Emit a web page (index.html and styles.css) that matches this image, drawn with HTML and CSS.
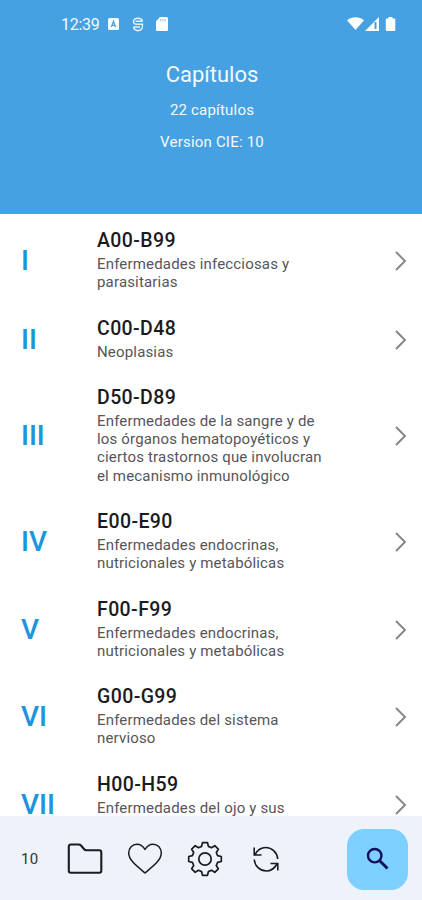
FILE: index.html
```html
<!DOCTYPE html>
<html lang="es">

<head>
    <meta charset="UTF-8">
    <title>Capítulos</title>
    <link rel="stylesheet" href="styles.css">
</head>

<body>
    <div id="header">
        <div class="status">
            <span class="clock">12:39</span>
            <svg class="app" width="11" height="12" viewBox="0 0 11 12">
                <rect width="11" height="12" rx="1.5" fill="#f5fbff" />
                <path d="M3.4 9L5.5 3.2 7.6 9M4.1 7.3h2.8" fill="none" stroke="#459fdf" stroke-width="1.2" />
            </svg>
            <svg class="shield" width="12" height="15" viewBox="0 0 12 15">
                <path d="M10.500 4.500C10.500 2.500 8.500 1.200 6 1.200S1.500 2.500 1.500 4.500 3 7.300 5 7.300h5.500v2C10.500 12 8.500 13.300 6 13.800 3.500 13.300 1.500 12 1.500 9.500M2 10H8M3.500 4.300h7" fill="none" stroke="#e3f3ff" stroke-width="1.4" />
            </svg>
            <svg class="card" width="12" height="14" viewBox="0 0 12 14">
                <path d="M4 0h6.500Q12 0 12 1.500v11Q12 14 10.500 14h-9Q0 14 0 12.500V4.200z" fill="#fff" />
                <path d="M4.800 2v2.500M7 2v2.500M9.200 2v2.500" stroke="#8fc5ec" stroke-width="1" />
            </svg>
            <svg class="signal" width="50" height="16" viewBox="0 0 50 16">
                <path d="M0 4.200C4.500.2 12.500.2 17 4.200L8.500 14z" fill="#fff" />
                <path d="M32 1v14H18z" fill="#fff" />
                <path d="M28.500 6v7" stroke="#459fdf" stroke-width="2" />
                <path d="M41.500 1h4v1.500H47q1.300 0 1.300 1.300V14q0 1-1 1h-7.500q-1 0-1-1V3.800q0-1.300 1.300-1.300h1.400z" fill="#fff" />
            </svg>
        </div>
        <div class="title">Capítulos</div>
        <div class="sub">22 capítulos</div>
        <div class="sub version">Version CIE: 10</div>
    </div>
    <ul id="content">
        <li>
            <span class="num">I</span>
            <div class="info">
                <div class="code">A00-B99</div>
                <div class="desc">Enfermedades infecciosas y<br>parasitarias</div>
            </div>
            <svg class="arrow" viewBox="0 0 12 20"><path d="M1 1l9 9-9 9" /></svg>
        </li>
        <li>
            <span class="num">II</span>
            <div class="info">
                <div class="code">C00-D48</div>
                <div class="desc">Neoplasias</div>
            </div>
            <svg class="arrow" viewBox="0 0 12 20"><path d="M1 1l9 9-9 9" /></svg>
        </li>
        <li>
            <span class="num">III</span>
            <div class="info">
                <div class="code">D50-D89</div>
                <div class="desc">Enfermedades de la sangre y de<br>los órganos hematopoyéticos y<br>ciertos trastornos que involucran<br>el mecanismo inmunológico</div>
            </div>
            <svg class="arrow" viewBox="0 0 12 20"><path d="M1 1l9 9-9 9" /></svg>
        </li>
        <li>
            <span class="num">IV</span>
            <div class="info">
                <div class="code">E00-E90</div>
                <div class="desc">Enfermedades endocrinas,<br>nutricionales y metabólicas</div>
            </div>
            <svg class="arrow" viewBox="0 0 12 20"><path d="M1 1l9 9-9 9" /></svg>
        </li>
        <li>
            <span class="num">V</span>
            <div class="info">
                <div class="code">F00-F99</div>
                <div class="desc">Enfermedades endocrinas,<br>nutricionales y metabólicas</div>
            </div>
            <svg class="arrow" viewBox="0 0 12 20"><path d="M1 1l9 9-9 9" /></svg>
        </li>
        <li>
            <span class="num">VI</span>
            <div class="info">
                <div class="code">G00-G99</div>
                <div class="desc">Enfermedades del sistema<br>nervioso</div>
            </div>
            <svg class="arrow" viewBox="0 0 12 20"><path d="M1 1l9 9-9 9" /></svg>
        </li>
        <li class="last">
            <span class="num">VII</span>
            <div class="info">
                <div class="code">H00-H59</div>
                <div class="desc">Enfermedades del ojo y sus</div>
            </div>
            <svg class="arrow" viewBox="0 0 12 20"><path d="M1 1l9 9-9 9" /></svg>
        </li>
    </ul>
    <div id="footer">
        <span class="count">10</span>
        <svg class="icon" viewBox="-18 -18 36 36" stroke-width="2.1">
            <path d="M-16.200-12.500Q-16.200-14.500-14.200-14.500H-6.500Q-5-14.500-4-13.500L-1-10Q0-8.700 1.500-8.700H14.200Q16.300-8.700 16.300-6.600V11.800Q16.300 13.800 14.300 13.800H-14.200Q-16.200 13.800-16.200 11.800Z" />
        </svg>
        <svg class="icon" viewBox="-18 -18 36 36" stroke-width="1.500">
            <path d="M0-9.500C-2-13-4.800-14.800-8-14.800c-4.800 0-8.300 3.800-8.300 8.800C-16.300 1-9 6.500 0 14 9 6.500 16.300 1 16.300-6c0-5-3.500-8.800-8.300-8.800C4.800-14.800 2-13 0-9.500z" />
        </svg>
        <svg class="icon" viewBox="-18 -18 36 36" stroke-width="1.700">
            <path d="M-2.500-16.300L2.500-16.300 3.400-12.600 6.500-11.300 9.800-13.300 13.300-9.800 11.300-6.500 12.600-3.400 16.300-2.500 16.300 2.500 12.600 3.400 11.300 6.500 13.300 9.800 9.800 13.300 6.500 11.300 3.400 12.600 2.500 16.300-2.500 16.300-3.400 12.600-6.500 11.300-9.800 13.300-13.300 9.800-11.300 6.500-12.600 3.400-16.300 2.500-16.300-2.500-12.600-3.400-11.300-6.500-13.300-9.800-9.800-13.300-6.500-11.300-3.400-12.600Z" />
            <circle r="6.200" />
        </svg>
        <svg class="icon" viewBox="-19 -18 36 36" stroke-width="1.600">
            <path d="M-11.800-11.500V-4H-4.500M-11-4.500C-8.500-9-5-11.500-.3-11.500 6-11.500 11.300-6.500 11.800 0M11.800 11.500V4.500H4.500M11 5C8.500 9.500 5 12 .3 12-6 12-11.300 7-11.800.500" stroke-linejoin="miter" />
        </svg>
        <div class="search">
            <svg width="24" height="24" viewBox="0 0 24 24">
                <circle cx="8.700" cy="8.700" r="6.700" />
                <path d="M13.700 13.700L21.500 21.500" stroke-width="3" />
            </svg>
        </div>
    </div>
</body>

</html>
```
FILE: styles.css
```css
body,
ul {
    margin: 0;
    padding: 0;
}

ul {
    list-style-type: none;
}

body {
    display: flex;
    flex-direction: column;
    height: 900px;
    overflow: hidden;
    background-color: #fff;
    font-family: Roboto, "Liberation Sans", sans-serif;
}

#header {
    flex: none;
    height: 214px;
    background-color: #45a1e2;
    color: #f3faff;
    text-align: center;
}

.status {
    display: flex;
    align-items: center;
    height: 48px;
    padding: 0 25px 0 61px;
}

.clock {
    width: 47px;
    font-size: 16px;
    letter-spacing: -0.3px;
    text-align: left;
}

.shield {
    margin-left: 13px;
}

.card {
    margin-left: 12px;
}

.signal {
    margin-left: auto;
}

.title {
    height: 30px;
    line-height: 30px;
    margin-top: 12px;
    padding-left: 2px;
    font-size: 22px;
}

.sub {
    height: 20px;
    line-height: 20px;
    margin-top: 10px;
    padding-left: 2px;
    font-size: 15px;
    letter-spacing: 0.2px;
}

.version {
    margin-top: 12px;
}

#content {
    flex: 1;
    min-height: 0;
    overflow: hidden;
    padding-top: 3.1px;
}

#content li {
    display: flex;
    align-items: center;
    padding: 10px 15px 9.2px 21px;
}

.num {
    width: 76px;
    font-size: 28px;
    line-height: 20px;
    font-weight: 500;
    color: #2193da;
}

.info {
    flex: 1;
    padding-bottom: 4px;
}

.code {
    font-size: 19.5px;
    line-height: 28px;
    font-weight: 500;
    letter-spacing: 0.4px;
    color: #1b1b1f;
}

.desc {
    font-size: 15px;
    line-height: 18.2px;
    letter-spacing: 0.17px;
    color: #56555a;
    white-space: nowrap;
}

.last .desc {
    height: 36.4px;
}

.arrow {
    width: 12px;
    height: 20px;
    fill: none;
    stroke: #85858a;
    stroke-width: 1.9;
}

#footer {
    flex: none;
    display: flex;
    align-items: center;
    height: 84px;
    padding: 2px 14px 0 21px;
    box-sizing: border-box;
    background-color: #eef2fb;
}

.count {
    width: 46px;
    font-size: 15px;
    letter-spacing: 0.2px;
    color: #333;
}

.icon {
    width: 36px;
    height: 36px;
    margin-right: 24px;
    fill: none;
    stroke: #1a1c20;
    stroke-linejoin: round;
}

.search {
    display: flex;
    align-items: center;
    justify-content: center;
    width: 61px;
    height: 61px;
    margin-left: auto;
    border-radius: 17px;
    background-color: #7dd0ff;
}

.search svg {
    fill: none;
    stroke: #12125c;
    stroke-width: 2.4;
}
```
